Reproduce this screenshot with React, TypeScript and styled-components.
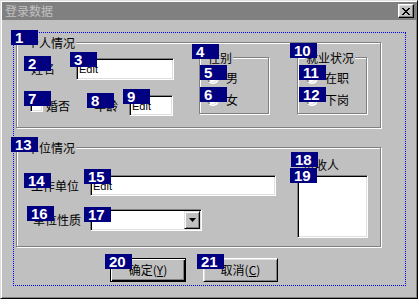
import React from "react";
import styled, { createGlobalStyle } from "styled-components";

const Global = createGlobalStyle`
  html, body { margin: 0; padding: 0; background: #c0c0c0; }
  body {
    font-family: "Noto Sans CJK SC", "Liberation Sans", sans-serif;
    font-size: 12px;
    color: #000;
  }
`;

const Frame = styled.div`
  box-sizing: border-box;
  width: 418px;
  height: 299px;
  padding: 1px;
  background: #c0c0c0;
  border: 1px solid;
  border-color: #dfdfdf #000 #000 #dfdfdf;
  box-shadow: inset 1px 1px #fff, inset -1px -1px #808080;
  display: flex;
  flex-direction: column;
`;

const TitleBar = styled.div`
  height: 18px;
  flex: none;
  background: #808080;
  display: flex;
  align-items: center;
  justify-content: space-between;
  padding: 0 2px 0 3px;
`;

const TitleText = styled.span`
  color: #c0c0c0;
  font-size: 12px;
  line-height: 12px;
  letter-spacing: 0;
`;

const CloseButton = styled.span`
  box-sizing: border-box;
  width: 16px;
  height: 14px;
  background: #c0c0c0;
  border: 1px solid;
  border-color: #fff #000 #000 #fff;
  box-shadow: inset -1px -1px #808080, inset 1px 1px #dfdfdf;
  display: flex;
  align-items: center;
  justify-content: center;
`;

const Body = styled.div`
  padding: 12px 0 0 11px;
`;

const Dotted = styled.div`
  box-sizing: border-box;
  width: 393px;
  height: 254px;
  border: 1px dotted #0000ff;
  padding: 3px 0 0 2px;
`;

const Badge = styled.span<{ $dx?: number; $dy?: number }>`
  position: absolute;
  left: ${(p) => p.$dx ?? -7}px;
  top: ${(p) => p.$dy ?? -7}px;
  z-index: 2;
  box-sizing: border-box;
  width: 27px;
  height: 15px;
  padding-left: 4px;
  background: #000080;
  color: #fff;
  font: bold 15px/15px "Liberation Sans", Arial, sans-serif;
`;

const Slot = styled.div<{ $top?: number; $left?: number }>`
  position: relative;
  flex: none;
  margin-top: ${(p) => p.$top ?? 0}px;
  margin-left: ${(p) => p.$left ?? 0}px;
`;

const Group = styled.fieldset<{ $w: number; $h: number }>`
  box-sizing: border-box;
  margin: 0;
  padding: 0;
  min-width: 0;
  width: ${(p) => p.$w}px;
  height: ${(p) => p.$h}px;
  border: 1px solid #808080;
  box-shadow: 1px 1px #fff, inset 1px 1px #fff;
`;

const Caption = styled.legend<{ $indent: number }>`
  margin-left: ${(p) => p.$indent}px;
  padding: 0 1px;
  font-size: 12px;
  line-height: 13px;
  background: #c0c0c0;
`;

const Split = styled.div`
  display: flex;
  align-items: flex-start;
`;

const Column = styled.div<{ $w: number; $top?: number }>`
  flex: none;
  width: ${(p) => p.$w}px;
  padding-top: ${(p) => p.$top ?? 0}px;
  display: flex;
  flex-direction: column;
`;

const Row = styled.div<{ $top: number; $h: number }>`
  display: flex;
  align-items: center;
  margin-top: ${(p) => p.$top}px;
  height: ${(p) => p.$h}px;
`;

const Label = styled.span<{ $left?: number; $w?: number }>`
  position: relative;
  flex: none;
  margin-left: ${(p) => p.$left ?? 0}px;
  width: ${(p) => (p.$w ? `${p.$w}px` : "auto")};
  line-height: 12px;
  white-space: nowrap;
`;

const Sunken = styled.div<{ $w: number; $h: number }>`
  position: relative;
  flex: none;
  box-sizing: border-box;
  width: ${(p) => p.$w}px;
  height: ${(p) => p.$h}px;
  background: #fff;
  border: 1px solid;
  border-color: #808080 #fff #fff #808080;
  box-shadow: inset 1px 1px #000, inset -1px -1px #dfdfdf;
`;

const Edit = styled(Sunken)`
  display: flex;
  align-items: center;
  padding-left: 2px;
  font: 11px "Liberation Sans", Arial, sans-serif;
`;

const Combo = styled(Sunken)`
  display: flex;
  justify-content: flex-end;
  padding: 1px;
`;

const DropButton = styled.span`
  box-sizing: border-box;
  width: 16px;
  height: 100%;
  background: #c0c0c0;
  border: 1px solid;
  border-color: #dfdfdf #000 #000 #dfdfdf;
  box-shadow: inset 1px 1px #fff, inset -1px -1px #808080;
  display: flex;
  align-items: center;
  justify-content: center;
`;

const CheckItem = styled.span<{ $left: number }>`
  position: relative;
  display: flex;
  align-items: center;
  gap: 3px;
  margin-left: ${(p) => p.$left}px;
  line-height: 12px;
`;

const Check = styled.span`
  box-sizing: border-box;
  width: 13px;
  height: 13px;
  background: #fff;
  border: 1px solid;
  border-color: #808080 #fff #fff #808080;
  box-shadow: inset 1px 1px #000, inset -1px -1px #dfdfdf;
`;

const Options = styled.div<{ $left: number }>`
  display: flex;
  flex-direction: column;
  gap: 10px;
  padding: 8px 0 0 ${(p) => p.$left}px;
`;

const Option = styled.span`
  position: relative;
  display: flex;
  align-items: center;
  gap: 7px;
  height: 12px;
  line-height: 12px;
  white-space: nowrap;
`;

const Radio = styled.span`
  box-sizing: border-box;
  width: 12px;
  height: 12px;
  border-radius: 50%;
  background: #fff;
  border: 1px solid;
  border-color: #808080 #fff #fff #808080;
  box-shadow: inset 1px 1px #000, inset -1px -1px #dfdfdf;
`;

const Buttons = styled.div`
  display: flex;
  gap: 17px;
  margin-top: 11px;
  padding-left: 94px;
`;

const PushButton = styled.div<{ $w: number; $default?: boolean }>`
  position: relative;
  box-sizing: border-box;
  width: ${(p) => p.$w}px;
  height: 24px;
  background: #c0c0c0;
  display: flex;
  align-items: center;
  justify-content: center;
  font-size: 12px;
  line-height: 12px;
  border: 1px solid;
  border-color: ${(p) => (p.$default ? "#000" : "#fff #000 #000 #fff")};
  box-shadow: ${(p) =>
    p.$default
      ? "inset 1px 1px #fff, inset -1px -1px #000, inset -2px -2px #808080"
      : "inset 1px 1px #dfdfdf, inset -1px -1px #808080"};
`;

const RadioOption: React.FC<{ n: number; text: string }> = ({ n, text }) => (
  <Option>
    <Badge>{n}</Badge>
    <Radio />
    {text}
  </Option>
);

export default function App() {
  return (
    <>
      <Global />
      <Frame>
        <TitleBar>
          <TitleText>登录数据</TitleText>
          <CloseButton>
            <svg width="8" height="7" viewBox="0 0 8 7">
              <path d="M0 0 L7 7 M1 0 L8 7 M7 0 L0 7 M8 0 L1 7" stroke="#000" strokeWidth="1" fill="none" />
            </svg>
          </CloseButton>
        </TitleBar>
        <Body>
          <Dotted>
            <Slot $top={0}>
              <Badge $dx={-5} $dy={-6}>1</Badge>
              <Group $w={365} $h={92}>
                <Caption $indent={9}>个人情况</Caption>
                <Split>
                  <Column $w={182}>
                    <Row $top={9} $h={22}>
                      <Label $left={14} $w={45}>
                        <Badge>2</Badge>姓名
                      </Label>
                      <Edit $w={98} $h={22}>
                        <Badge>3</Badge>Edit
                      </Edit>
                    </Row>
                    <Row $top={15} $h={21}>
                      <CheckItem $left={13}>
                        <Badge $dx={-6} $dy={-8}>7</Badge>
                        <Check />
                        婚否
                      </CheckItem>
                      <Label $left={24} $w={35}>
                        <Badge>8</Badge>年龄
                      </Label>
                      <Edit $w={44} $h={21}>
                        <Badge>9</Badge>Edit
                      </Edit>
                    </Row>
                  </Column>
                  <Slot $top={2}>
                    <Badge>4</Badge>
                    <Group $w={70} $h={63}>
                      <Caption $indent={7}>性别</Caption>
                      <Options $left={7}>
                        <RadioOption n={5} text="男" />
                        <RadioOption n={6} text="女" />
                      </Options>
                    </Group>
                  </Slot>
                  <Slot $top={2} $left={28}>
                    <Badge $dy={-8}>10</Badge>
                    <Group $w={70} $h={63}>
                      <Caption $indent={7}>就业状况</Caption>
                      <Options $left={8}>
                        <RadioOption n={11} text="在职" />
                        <RadioOption n={12} text="下岗" />
                      </Options>
                    </Group>
                  </Slot>
                </Split>
              </Group>
            </Slot>

            <Slot $top={13}>
              <Badge $dx={-5} $dy={-4}>13</Badge>
              <Group $w={365} $h={106}>
                <Caption $indent={9}>单位情况</Caption>
                <Split>
                  <Column $w={280}>
                    <Row $top={21} $h={21}>
                      <Label $left={14} $w={59}>
                        <Badge>14</Badge>工作单位
                      </Label>
                      <Edit $w={186} $h={21}>
                        <Badge>15</Badge>Edit
                      </Edit>
                    </Row>
                    <Row $top={13} $h={22}>
                      <Label $left={16} $w={57}>
                        <Badge $dx={-6} $dy={-8}>16</Badge>单位性质
                      </Label>
                      <Combo $w={112} $h={22}>
                        <Badge $dy={-3}>17</Badge>
                        <DropButton>
                          <svg width="7" height="4" viewBox="0 0 7 4">
                            <path d="M0 0 H7 L3.5 4 Z" fill="#000" />
                          </svg>
                        </DropButton>
                      </Combo>
                    </Row>
                  </Column>
                  <Column $w={71} $top={5}>
                    <Label $left={6}>
                      <Badge $dx={-12}>18</Badge>接收人
                    </Label>
                    <Slot $top={4}>
                      <Badge>19</Badge>
                      <Sunken $w={71} $h={63} />
                    </Slot>
                  </Column>
                </Split>
              </Group>
            </Slot>

            <Buttons>
              <PushButton $w={76} $default>
                <Badge $dx={-6} $dy={-5}>20</Badge>
                确定(<u>Y</u>)
              </PushButton>
              <PushButton $w={75}>
                <Badge $dx={-7} $dy={-5}>21</Badge>
                取消(<u>C</u>)
              </PushButton>
            </Buttons>
          </Dotted>
        </Body>
      </Frame>
    </>
  );
}
